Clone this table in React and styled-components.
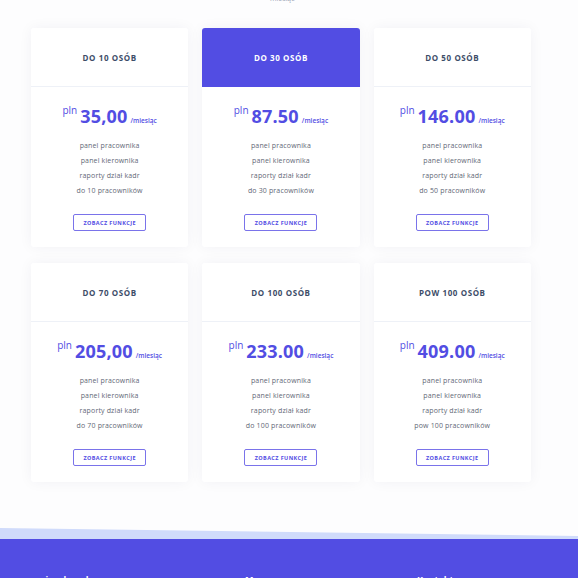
import React from 'react'
import styled, { createGlobalStyle } from 'styled-components'

const plans = [
  { title: 'DO 10 OSÓB', price: '35,00', limit: 'do 10 pracowników' },
  { title: 'DO 30 OSÓB', price: '87.50', limit: 'do 30 pracowników', featured: true },
  { title: 'DO 50 OSÓB', price: '146.00', limit: 'do 50 pracowników' },
  { title: 'DO 70 OSÓB', price: '205,00', limit: 'do 70 pracowników' },
  { title: 'DO 100 OSÓB', price: '233.00', limit: 'do 100 pracowników' },
  { title: 'POW 100 OSÓB', price: '409.00', limit: 'pow 100 pracowników' },
]

export default function App() {
  return (
    <Page>
      <GlobalStyle />
      <Pricing>
        <Note>miesiąc</Note>
        <Grid>
          {plans.map((p) => (
            <Card key={p.title}>
              <CardHeader $featured={p.featured}>{p.title}</CardHeader>
              <CardBody>
                <PriceRow>
                  <Currency>pln</Currency>
                  <Amount>{p.price}</Amount>
                  <Period>/miesiąc</Period>
                </PriceRow>
                <Features>
                  <li>panel pracownika</li>
                  <li>panel kierownika</li>
                  <li>raporty dział kadr</li>
                  <li>{p.limit}</li>
                </Features>
                <Button>ZOBACZ FUNKCJE</Button>
              </CardBody>
            </Card>
          ))}
        </Grid>
      </Pricing>
      <Footer>
        <Wave />
        <FooterBody>
          <FooterTitle>mojeurlop.pl</FooterTitle>
          <FooterTitle>Menu</FooterTitle>
          <FooterTitle>Kontakt</FooterTitle>
        </FooterBody>
      </Footer>
    </Page>
  )
}

const GlobalStyle = createGlobalStyle`
  body {
    margin: 0;
    background: #fdfdfe;
    font-family: "Open Sans", "Noto Sans", sans-serif;
    overflow: hidden;
  }
`

const Page = styled.div`
  width: 578px;
  height: 578px;
  overflow: hidden;
`

const Pricing = styled.section`
  position: relative;
  padding: 28px 0 0 31px;
`

const Note = styled.div`
  position: absolute;
  top: -6px;
  left: 270px;
  font-size: 7px;
  color: #9aa3b5;
`

const Grid = styled.div`
  display: grid;
  grid-template-columns: repeat(3, 157.3px);
  column-gap: 14px;
  row-gap: 16px;
`

const Card = styled.div`
  background: #fff;
  border-radius: 3px;
  box-shadow: 0 0 14px rgba(30, 40, 80, 0.05);
  display: flex;
  flex-direction: column;
`

const CardHeader = styled.div`
  height: 58px;
  display: flex;
  align-items: center;
  justify-content: center;
  font-size: 8px;
  font-weight: 700;
  letter-spacing: 0.6px;
  border-radius: 3px 3px 0 0;
  background: ${(p) => (p.$featured ? '#524de3' : '#fff')};
  color: ${(p) => (p.$featured ? '#fff' : '#3d4d68')};
  border-bottom: 1px solid ${(p) => (p.$featured ? '#524de3' : '#eef1f7')};
`

const CardBody = styled.div`
  display: flex;
  flex-direction: column;
  align-items: center;
  padding: 17px 0 16px;
`

const PriceRow = styled.div`
  display: flex;
  align-items: baseline;
  color: #524de3;
  height: 20px;
`

const Currency = styled.span`
  font-size: 10px;
  align-self: flex-start;
  margin-right: 3px;
  margin-top: -1px;
`

const Amount = styled.span`
  font-size: 18px;
  font-weight: 700;
  letter-spacing: 0.2px;
`

const Period = styled.span`
  font-size: 6.5px;
  font-weight: 600;
  margin-left: 3px;
`

const Features = styled.ul`
  list-style: none;
  margin: 14px 0 0;
  padding: 0;
  text-align: center;
  font-size: 7px;
  line-height: 15px;
  letter-spacing: 0.15px;
  color: #5f6877;
`

const Button = styled.button`
  margin-top: 16px;
  width: 73px;
  height: 17px;
  padding: 0;
  background: #fff;
  border: 1px solid #7a73ea;
  border-radius: 2px;
  color: #524de3;
  font-family: inherit;
  font-size: 5.5px;
  font-weight: 700;
  letter-spacing: 0.4px;
`

const Footer = styled.footer`
  margin-top: 46px;
`

const Wave = styled.div`
  height: 11px;
  background: #d0dbfb;
  clip-path: polygon(0 0, 100% 8px, 100% 100%, 0 100%);
`

const FooterBody = styled.div`
  background: #524de3;
  padding: 34px 0 0 31px;
  height: 60px;
  display: grid;
  grid-template-columns: 214px 172px 1fr;
`

const FooterTitle = styled.div`
  color: #fff;
  font-size: 9px;
  font-weight: 700;
`
